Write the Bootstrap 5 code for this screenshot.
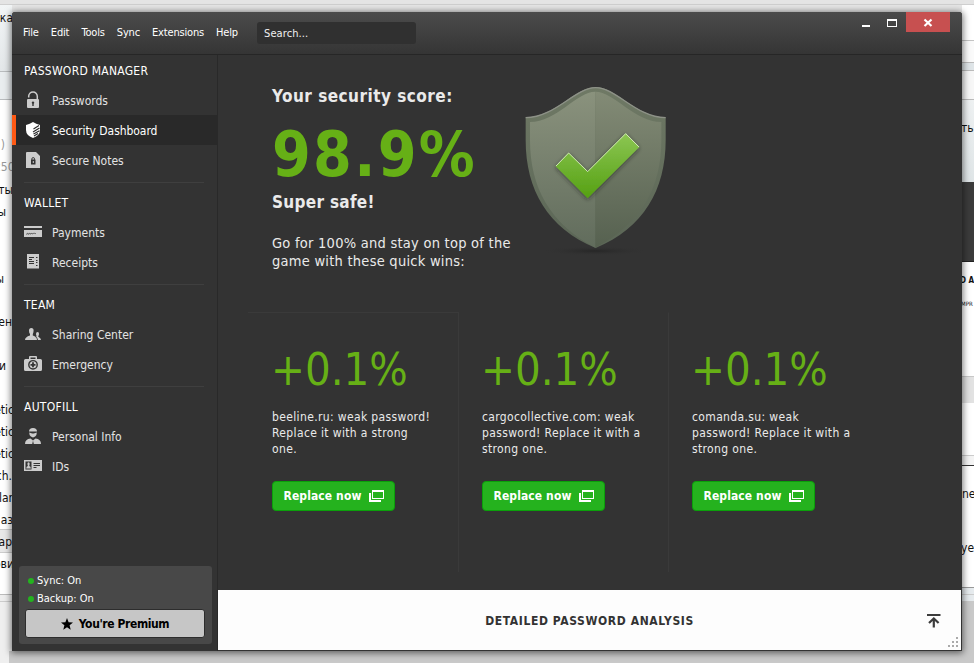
<!DOCTYPE html>
<html lang="en">
<head>
<meta charset="utf-8">
<title>Security Dashboard</title>
<meta name="viewport" content="width=device-width, initial-scale=1">
<link href="https://cdn.jsdelivr.net/npm/bootstrap@5.3.0/dist/css/bootstrap.min.css" rel="stylesheet">
<style>
body{font-family:"DejaVu Sans Condensed","DejaVu Sans",Tahoma,sans-serif;font-size:12px;height:663px;width:974px;overflow:hidden;color:#eaeaea;
 background:linear-gradient(#e4e4e4 0 4px,#cfcfcf 4px 5px,#e6e6e6 5px 12px,#fff 12px)}
/* desktop behind the window */
.desk{width:974px;height:663px;z-index:0;color:#111;font-size:12px}
.strip{position:absolute;overflow:hidden;white-space:nowrap}
.strip-l{left:0;top:5px;width:12px;height:658px;background:linear-gradient(#f2f5f6 0,#e3e7e9 66px,#b9bcbe 66px 67px,#e9edef 67px 94px,#b9bcbe 94px 95px,#fff 95px 524px,#ccc 524px 525px,#e8e8e8 525px 547px,#ccc 547px 548px,#fff 548px 589px,#bbb 589px 590px,#eee 590px 596px,#ccc 596px 597px,#efefef 597px)}
.strip-r{left:962px;top:5px;width:12px;height:658px;background:linear-gradient(#fff 0 35px,#c4c4c4 35px 36px,#fafafa 36px 57px,#bbb 57px 58px,#dfe5e8 58px 65px,#bbb 65px 66px,#f7f7f7 66px 94px,#bbb 94px 95px,#eef1f2 95px,#dfe5e7 177px,#3b3b3b 177px 256px,#222 256px 257px,#fff 257px 371px,#c8c8c8 371px 372px,#e2e2e2 372px 398px,#fff 398px 450px,#ccc 450px 451px,#f4f4f4 451px 460px,#333 460px 461px,#fff 461px 582px,#999 582px 583px,#e6ebee 583px 589px,#ccc 589px 590px,#e6ebee 590px 596px,#c9c9c9 596px)}
.strip span{position:absolute;line-height:16px}
.strip-b{left:9px;top:651px;width:965px;height:12px;background:#c9c9c9}
.win{position:relative;z-index:1;margin:12px 0 0 12px;width:950px;height:639px;background:#333;border-radius:3px 3px 0 0;box-shadow:0 1px 7px 1px rgba(0,0,0,.55)}
.topbar{height:43px;background:linear-gradient(#4b4b4b,#353535);border-bottom:1px solid #262626;border-radius:3px 3px 0 0;font-size:11px;color:#fff}
.menus{padding:1px 0 0 11px;gap:12.1px;width:244px;letter-spacing:-.18px}
.searchbox{width:159px;height:22px;margin-left:1px;background:#303030;border-radius:3px;padding:2px 0 0 7px;color:#f0f0f0;letter-spacing:.1px}
.side{width:206px;border-right:1px solid #292929}
.rule{height:1px;background:#3f3f3f;margin:7px 13px 4px 12px}
.head{height:30px;padding:2px 0 0 12px;color:#fff;letter-spacing:.27px}
.item{height:30px;padding:2px 0 0 12px;color:#e3e3e3}
.item svg{width:18px;height:18px;margin:-2px 10px 0 0;fill:#ccc;flex:none}
.item.on{background:#292929;color:#fff;border-left:4px solid #ff5a15;padding-left:8px;letter-spacing:-.05px}
.item.on svg{fill:#fff}
.status{margin:0 5px 7px 7px;height:78px;background:#484848;border-radius:3px;padding:6px 7px 6px 6px;font-size:11px;color:#fff}
.status .ln{height:18px;padding-left:3px;gap:3px}
.dot{width:6px;height:6px;border-radius:50%;background:#24b31f;margin-top:-1px}
.prem{height:29px;margin-top:1px;background:#c6c6c6;border:1px solid #2d2d2d;border-radius:3px;color:#000;font-size:12px;font-weight:bold;gap:6px;letter-spacing:-.4px}
.hero{height:257px;padding:28px 0 0 54px}
.hero-text{width:248px}
.t1{font-size:17px;font-weight:bold;line-height:26px;letter-spacing:.47px}
.score{font-size:62px;font-weight:bold;line-height:62px;color:#66b016;margin-top:15px;letter-spacing:2.3px}
.t2{margin-top:3px;letter-spacing:.3px}
.go{font-size:14.5px;line-height:18px;margin-top:19px;white-space:nowrap;letter-spacing:.25px}
.shield{width:150px;height:174px}
.wins{margin-left:30px;height:260px}
.tip{width:210px;padding:31px 0 0 23px;border-right:1px solid #3a3a3a;border-top:1px solid transparent}
.tip:first-child{width:211px;padding-left:24px;border-top-color:#3a3a3a}
.tip:last-child{border-right:0}
.pct{font-size:45px;line-height:52px;color:#66b016;margin-left:-1px}
.msg{height:48px;line-height:16px;margin-top:13px;white-space:nowrap;letter-spacing:.36px}
.go-btn{width:123px;height:30px;margin-top:24px;background:#25b21e;border:1px solid #0aa00a;border-radius:4px;color:#fff;font-weight:bold;font-size:12px;gap:7px;letter-spacing:.1px}
.go-btn svg{margin-top:-1px}
.foot{height:60px;background:#fdfdfd;color:#333;margin-right:1px;margin-bottom:1px;padding-top:2px;position:relative;font-weight:bold;letter-spacing:.62px}
.up{position:absolute;right:20px;top:24px}
.grip{position:absolute;right:2px;bottom:2px}
</style>
</head>
<body>
<div class="desk position-absolute top-0 start-0">
 <div class="strip strip-l">
  <span style="top:5px;right:-1px">ка</span><span style="top:132px;right:7px;color:#999">)</span><span style="top:154px;left:-6px;color:#999">250</span><span style="top:177px;right:-1px">нты</span><span style="top:199px;right:6px">ы</span><span style="top:266px;right:8px">ы</span><span style="top:309px;right:0">ен</span><span style="top:353px;right:6px">и</span><span style="top:397px;right:-2px">etic</span><span style="top:419px;right:-2px">etic</span><span style="top:441px;right:-2px">etic</span><span style="top:463px;right:0">ch.</span><span style="top:485px;right:-1px">lar</span><span style="top:507px;right:-1px">аз</span><span style="top:529px;right:0">ар</span><span style="top:551px;right:-2px">ови</span>
 </div>
 <div class="strip strip-r">
  <span style="top:115px;left:-1px">ть</span><span style="top:268px;left:-2px;font-size:8px;font-weight:bold">D A</span><span style="top:291px;left:-1px;font-size:6px">MPR</span><span style="top:481px;left:0">ne</span><span style="top:535px;left:-1px">ye</span>
 </div>
 <div class="strip strip-b"></div>
</div>

<div class="win d-flex flex-column">
 <header class="topbar d-flex flex-shrink-0">
  <nav class="menus d-flex align-items-center"><span>File</span><span>Edit</span><span>Tools</span><span>Sync</span><span>Extensions</span><span>Help</span></nav>
  <div class="searchbox d-flex align-items-center align-self-center">Search...</div>
  <div class="d-flex ms-auto me-2 pe-1">
   <svg width="104" height="20" viewBox="0 0 104 20" shape-rendering="crispEdges"><rect x="60" width="44" height="20" fill="#c75050"/><rect x="16" y="13" width="8" height="2" fill="#fff"/><path d="M41 7h10v8h-10zM42 9v5h8v-5z" fill="#fff" fill-rule="evenodd"/><path d="M78.500 7.500l7 6.500M85.500 7.500l-7 6.500" stroke="#fff" stroke-width="2.200" shape-rendering="auto"/></svg>
  </div>
 </header>
 <div class="d-flex flex-grow-1">
  <aside class="side d-flex flex-column flex-shrink-0">
   <div class="head d-flex align-items-center">PASSWORD MANAGER</div>
   <div class="item d-flex align-items-center"><svg viewBox="0 0 18 18"><path d="M4.700 6.500V5.300a4.300 4.300 0 0 1 8.600 0V8" fill="none" stroke="#ccc" stroke-width="1.500"/><path fill-rule="evenodd" d="M4 8h10q1 0 1 1v7q0 1-1 1H4q-1 0-1-1V9q0-1 1-1zm5 2.500a1.200 1.200 0 0 0-.7 2.200V15h1.400v-2.300A1.200 1.200 0 0 0 9 10.500z"/></svg>Passwords</div>
   <div class="item on d-flex align-items-center"><svg viewBox="0 0 18 18"><path d="M9 1Q12 3 16 4v5q0 5.500-7 8Q2 14.500 2 9V4Q6 3 9 1z"/><path d="M9.500 8L15 4.500M9 11L15.500 7M9.500 13L15.500 9.700M10 15l4-2.500" stroke="#292929" stroke-width="1.100" fill="none"/></svg>Security Dashboard</div>
   <div class="item d-flex align-items-center"><svg viewBox="0 0 18 18"><path fill-rule="evenodd" d="M3 1h9l4 4v12H2V2q0-1 1-1z"/><path d="M7 8.500h4.500v5H7z" fill="#333"/><path d="M7.900 8.800V7.800q0-1.200 1.300-1.200t1.300 1.200v1" fill="none" stroke="#333"/><path d="M8.800 10h1v2h-1z"/></svg>Secure Notes</div>
   <div class="rule"></div>
   <div class="head d-flex align-items-center">WALLET</div>
   <div class="item d-flex align-items-center"><svg viewBox="0 0 18 18"><path d="M0 3h18v2H0zM0 7h18v7H0z"/><path d="M2 11.500l2-1.500v1.500l2-1.500v1.200l2-1v.8l2-.8 2 .5" stroke="#555" stroke-width=".8" fill="none"/></svg>Payments</div>
   <div class="item d-flex align-items-center"><svg viewBox="0 0 18 18"><path d="M3 1h12v15l-1-1-1 1-1-1-1 1-1-1-1 1-1-1-1 1-1-1-1 1-1-1-1 1z"/><path d="M5 4.500h5M5 6.500h3M5 8.500h5M5 10.500h5M12 4.500h1.500M12 7.500h1.500M12 9.500h1.500M12 12.500h1.500" stroke="#333" fill="none"/></svg>Receipts</div>
   <div class="rule"></div>
   <div class="head d-flex align-items-center">TEAM</div>
   <div class="item d-flex align-items-center"><svg viewBox="0 0 18 18"><path d="M7.300 3q2.400 0 2.300 2.800Q9.400 8 8.800 9v1.500Q13 12 13 15H1q0-3 5-4.500V9Q5 8 5 5.800 5 3 7.300 3zM13.500 7q1.700 0 1.500 2-.1 1.500-.7 2v.8Q17 13 17 15h-3q-.4-2.500-2.500-3.800l1.200.3V11q-.7-.7-.7-2 0-2 1.500-2z"/></svg>Sharing Center</div>
   <div class="item d-flex align-items-center"><svg viewBox="0 0 18 18"><path fill-rule="evenodd" d="M5 4V2q0-1 1-1h6q1 0 1 1v2h3.500Q18 4 18 5.500v9q0 1.500-1.500 1.500h-15Q0 16 0 14.500v-9Q0 4 1.500 4zm1.500 0h5V2.500h-5z"/><circle cx="9" cy="9.800" r="4.200" fill="none" stroke="#333" stroke-width="1.400"/><path d="M9 7.300v5M6.500 9.800h5" stroke="#333" stroke-width="1.800"/></svg>Emergency</div>
   <div class="rule"></div>
   <div class="head d-flex align-items-center">AUTOFILL</div>
   <div class="item d-flex align-items-center"><svg viewBox="0 0 18 18"><path d="M5 4.500Q5 1 9 1t4 3.500zM5.200 5.500l3 .9h1.600l3-.9q0 2.500-1.400 3.800Q9 11.500 6.600 9.300 5.200 8 5.200 5.500zM6.500 11.500L9 13.500l2.500-2q5.500.5 5.500 5.500H9.800L9 13.800 8.200 17H1q0-5 5.500-5.500z"/></svg>Personal Info</div>
   <div class="item d-flex align-items-center"><svg viewBox="0 0 18 18"><path d="M0 3h18v11H0z"/><path d="M1.500 4.500h6v8h-6z" fill="#333"/><path d="M4.500 5.300q1.300 0 1.200 1.700L5.200 9q1.500.4 1.700 2.500H2.200Q2.300 9.400 3.900 9L3.400 7q-.1-1.700 1.100-1.700z"/><path d="M9.500 6.500H16M9.500 8.500H16M9.500 10.500h3" stroke="#333"/></svg>IDs</div>
   <div class="status mt-auto">
    <div class="ln d-flex align-items-center"><i class="dot"></i>Sync: On</div>
    <div class="ln d-flex align-items-center"><i class="dot"></i>Backup: On</div>
    <div class="prem d-flex align-items-center justify-content-center"><svg width="12" height="12" viewBox="0 0 12 12"><path d="M6 0l1.600 4.200L12 4.500 8.600 7.300 9.700 11.700 6 9.300 2.300 11.700 3.400 7.300 0 4.500l4.400-.3z"/></svg>You're Premium</div>
   </div>
  </aside>
  <main class="flex-grow-1 d-flex flex-column">
   <section class="hero d-flex">
    <div class="hero-text">
     <div class="t1">Your security score:</div>
     <div class="score">98.9%</div>
     <div class="t1 t2">Super safe!</div>
     <div class="go">Go for 100% and stay on top of the<br>game with these quick wins:</div>
    </div>
    <svg class="shield" viewBox="60 39 450 522">
     <defs>
      <linearGradient id="gl" x1="0" y1="0" x2="0" y2="1"><stop offset="0" stop-color="#8a927d"/><stop offset="1" stop-color="#616c5c"/></linearGradient>
      <linearGradient id="gr" x1="0" y1="0" x2="0" y2="1"><stop offset="0" stop-color="#838b76"/><stop offset="1" stop-color="#566150"/></linearGradient>
      <linearGradient id="ge" x1="0" y1="0" x2="0" y2="1"><stop offset="0" stop-color="#6f7965"/><stop offset="1" stop-color="#5b6656"/></linearGradient>
      <linearGradient id="gc" x1="0" y1="0" x2="0" y2="1"><stop offset="0" stop-color="#8cc653"/><stop offset="1" stop-color="#55a012"/></linearGradient>
      <radialGradient id="gs"><stop offset="0" stop-color="#262626"/><stop offset="1" stop-color="#333" stop-opacity="0"/></radialGradient>
      <filter id="fs" x="-20%" y="-20%" width="140%" height="140%"><feDropShadow dx="0" dy="4" stdDeviation="6" flood-color="#222" flood-opacity=".6"/></filter>
     </defs>
     <ellipse cx="286" cy="543" rx="165" ry="14" fill="url(#gs)"/>
     <path d="M77 142C165 142 225 51 287 51S409 142 497 142V210C497 360 430 475 287 534C144 475 77 360 77 210z" fill="url(#ge)"/>
     <path d="M77 143C165 143 225 53 287 53S409 143 497 143" fill="none" stroke="#8d9187" stroke-width="4"/>
     <path d="M286 65C230 65 170 156 90 156V210C90 352 150 462 286 533z" fill="url(#gl)"/>
     <path d="M286 65C342 65 404 156 484 156V210C484 352 424 462 286 533z" fill="url(#gr)"/>
     <path d="M167 289L206 248 263 304 377 190 418 231 263 385z" fill="url(#gc)" filter="url(#fs)"/>
     <path d="M168 288L206 249 263 305 377 191 417 231" fill="none" stroke="#cfe6b4" stroke-width="3"/>
    </svg>
   </section>
   <section class="wins d-flex">
    <div class="tip"><div class="pct">+0.1%</div><div class="msg">beeline.ru: weak password!<br>Replace it with a strong<br>one.</div><div class="go-btn d-flex align-items-center justify-content-center">Replace now<svg width="15" height="12" viewBox="0 0 15 12" shape-rendering="crispEdges"><path fill="#fff" fill-rule="evenodd" d="M3 0h12v9H3zM4 2v6h10V2zM0 3h2v7h10v2H0z"/></svg></div></div>
    <div class="tip"><div class="pct">+0.1%</div><div class="msg">cargocollective.com: weak<br>password! Replace it with a<br>strong one.</div><div class="go-btn d-flex align-items-center justify-content-center">Replace now<svg width="15" height="12" viewBox="0 0 15 12" shape-rendering="crispEdges"><path fill="#fff" fill-rule="evenodd" d="M3 0h12v9H3zM4 2v6h10V2zM0 3h2v7h10v2H0z"/></svg></div></div>
    <div class="tip"><div class="pct">+0.1%</div><div class="msg">comanda.su: weak<br>password! Replace it with a<br>strong one.</div><div class="go-btn d-flex align-items-center justify-content-center">Replace now<svg width="15" height="12" viewBox="0 0 15 12" shape-rendering="crispEdges"><path fill="#fff" fill-rule="evenodd" d="M3 0h12v9H3zM4 2v6h10V2zM0 3h2v7h10v2H0z"/></svg></div></div>
   </section>
   <footer class="foot mt-auto d-flex align-items-center justify-content-center"><span>DETAILED PASSWORD ANALYSIS</span>
    <svg class="up" width="14" height="14" viewBox="0 0 14 14"><path d="M0 1h13.500M6.800 13.500V5M2 9l4.800-4.500L11.600 9" fill="none" stroke="#3c3c3c" stroke-width="2.200"/></svg>
    <svg class="grip" width="12" height="12" viewBox="0 0 12 12" fill="#aaa"><path d="M9 1h2v2H9zM5 5h2v2H5zM9 5h2v2H9zM1 9h2v2H1zM5 9h2v2H5zM9 9h2v2H9z"/></svg>
   </footer>
  </main>
 </div>
</div>
<script src="https://cdn.jsdelivr.net/npm/bootstrap@5.3.0/dist/js/bootstrap.bundle.min.js"></script>
</body>
</html>
